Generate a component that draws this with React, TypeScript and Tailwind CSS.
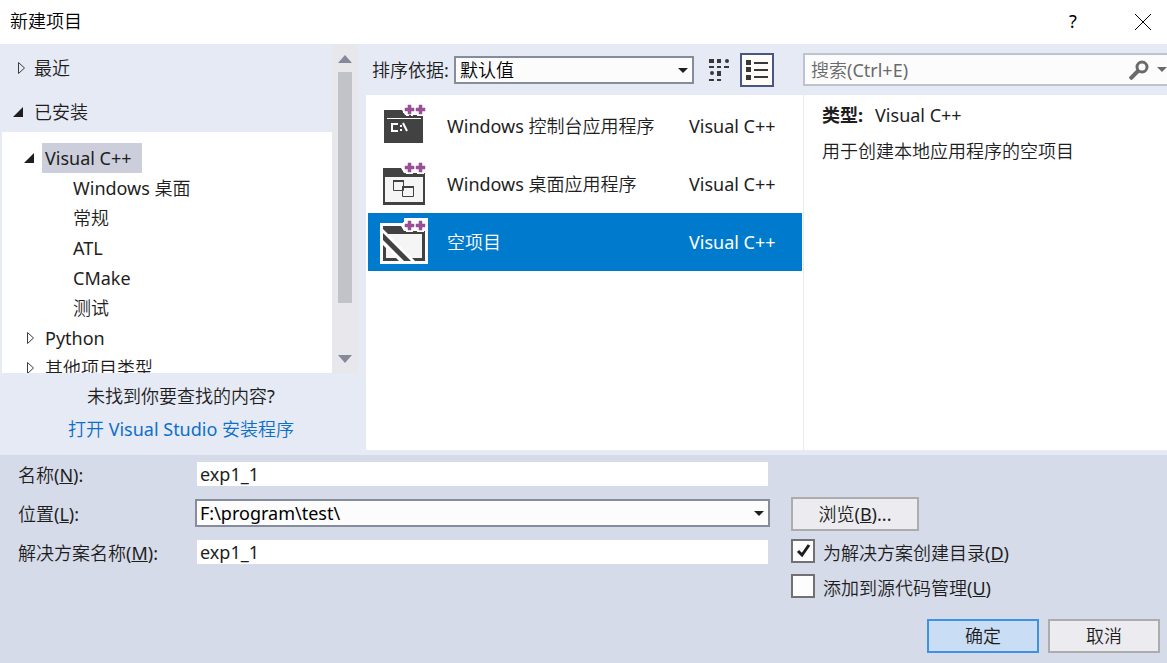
import type { ReactNode } from "react";

function PlusPair() {
  return (
    <g>
      <path d="M28 3h3v3h3v3h-3v3h-3v-3h-3v-3h3zM39 3h3v3h3v3h-3v3h-3v-3h-3v-3h3z" fill="#fff" stroke="#fff" strokeWidth="4" />
      <path d="M28 3h3v3h3v3h-3v3h-3v-3h-3v-3h3zM39 3h3v3h3v3h-3v3h-3v-3h-3v-3h3z" fill="#9b4f96" stroke="#9b4f96" strokeWidth="0.5" />
    </g>
  );
}

function ConsoleIcon() {
  return (
    <svg width="48" height="48" viewBox="0 0 48 48" aria-hidden="true">
      <path d="M4 8h18l3 5h18v28H4z" fill="#424242" />
      <PlusPair />
      <path d="M29 13h2v3h-2zM34 14h9v2h-9z" fill="#424242" />
      <path d="M7 16h34v1H7z" fill="#fff" />
      <path d="M18 22h-6v7h6M21 23v2M21 27v2M23 21l4 8" fill="none" stroke="#fff" strokeWidth="2" />
    </svg>
  );
}

function DesktopIcon() {
  return (
    <svg width="48" height="48" viewBox="0 0 48 48" aria-hidden="true">
      <path d="M3 8h18l3 5h21v32H3z" fill="#424242" />
      <path d="M5 17h38v25H5z" fill="#f5f5f5" />
      <PlusPair />
      <path d="M26 15h19v2H26z" fill="#424242" />
      <path d="M13.500 21.500h10v9h-10zM22.500 27.500h11v9h-11z" fill="#f5f5f5" stroke="#424242" />
      <path d="M13 21h11M22 27h12" stroke="#424242" strokeWidth="2" />
    </svg>
  );
}

function EmptyIcon() {
  return (
    <svg width="48" height="48" viewBox="0 0 48 48" aria-hidden="true">
      <path d="M0 5h24V0h24v46H0z" fill="#fff" />
      <path d="M3 8h18l3 5h21v30H3z" fill="#424242" />
      <path d="M6 16h36v24H6z" fill="#f5f5f5" />
      <PlusPair />
      <path d="M26 14h19v2H26z" fill="#424242" />
      <path d="M3 11l35 35H20L3 28z" fill="#fff" />
      <path d="M3 26l17 17H3zM10 16h32v24H34z" fill="#f5f5f5" />
      <path d="M3 27v16h16l-3-3H6V30zM34 40h8v3h-5z" fill="#424242" />
      <path d="M3 15l28 28h-7L3 22z" fill="#424242" />
    </svg>
  );
}

function Expander({ open = false }: { open?: boolean }) {
  return (
    <svg width="12" height="14" viewBox="0 0 12 14" className="shrink-0" aria-hidden="true">
      {open ? <path d="M11 2v10H1z" fill="#1e1e1e" /> : <path d="M4.500 1.500v11l6-5.500z" fill="none" stroke="#3c3c3c" />}
    </svg>
  );
}

function Caret({ className }: { className: string }) {
  return (
    <svg width="10" height="5" viewBox="0 0 10 5" className={className} aria-hidden="true">
      <path d="M0 0h10L5 5z" fill="currentColor" />
    </svg>
  );
}

function TreeRow({ label, level, open, selected }: { label: string; level: number; open?: boolean; selected?: boolean }) {
  return (
    <li className={level === 2 ? "flex h-[30px] items-center pl-[68px]" : "flex h-[30px] items-center gap-[7px] pl-[21px]"}>
      {level === 1 && <Expander open={open} />}
      <button className={selected ? "h-[30px] w-[100px] bg-[#cccedb] px-[3px] text-left" : "h-[30px] px-[3px]"}>{label}</button>
    </li>
  );
}

const templates: { name: string; icon: ReactNode; selected?: boolean }[] = [
  { name: "Windows 控制台应用程序", icon: <ConsoleIcon /> },
  { name: "Windows 桌面应用程序", icon: <DesktopIcon /> },
  { name: "空项目", icon: <EmptyIcon />, selected: true },
];

function Check({ checked, children }: { checked?: boolean; children: ReactNode }) {
  return (
    <label className="flex h-6 items-center gap-2">
      <span className="grid size-6">
        <input type="checkbox" defaultChecked={checked} className="peer col-start-1 row-start-1 size-6 appearance-none border-2 border-[#717171] bg-[#fdfdfd]" />
        <svg viewBox="0 0 24 24" className="pointer-events-none invisible col-start-1 row-start-1 size-6 peer-checked:visible" aria-hidden="true">
          <path d="M7 12l4 4 7-10" fill="none" stroke="#1e1e1e" strokeWidth="3" />
        </svg>
      </span>
      <span className="pt-1">{children}</span>
    </label>
  );
}

export default function App() {
  return (
    <div className="flex h-screen flex-col overflow-hidden bg-[#e6eaf5] font-['Noto_Sans','Noto_Sans_CJK_SC_DemiLight','Noto_Sans_CJK_SC_Light','Noto_Sans_CJK_SC',sans-serif] text-lg/6 text-[#1e1e1e]">
      <header className="flex h-11 shrink-0 items-center bg-white pl-[10px] text-black">
        <h1 className="flex-1 pb-[2px]">新建项目</h1>
        <button aria-label="帮助" className="h-11 w-[92px] pb-[2px]">?</button>
        <button aria-label="关闭" className="grid h-11 w-12 place-items-center">
          <svg width="16" height="16" viewBox="0 0 16 16" aria-hidden="true">
            <path d="M0 0l16 16M16 0L0 16" stroke="#000" />
          </svg>
        </button>
      </header>

      <main className="flex min-h-0 flex-1 pb-[5px]">
        <aside className="flex w-[366px] shrink-0 flex-col">
          <div className="flex min-h-0 flex-1 pr-2">
            <nav className="flex min-w-0 flex-1 flex-col pl-[2px]">
              <button className="flex h-12 shrink-0 items-center gap-2 pl-3"><Expander />最近</button>
              <button className="flex h-10 shrink-0 items-center gap-[10px] pl-[10px]"><Expander open />已安装</button>
              <ul className="min-h-0 flex-1 overflow-hidden bg-white pt-[11px]">
                <TreeRow label="Visual C++" level={1} open selected />
                <TreeRow label="Windows 桌面" level={2} />
                <TreeRow label="常规" level={2} />
                <TreeRow label="ATL" level={2} />
                <TreeRow label="CMake" level={2} />
                <TreeRow label="测试" level={2} />
                <TreeRow label="Python" level={1} />
                <TreeRow label="其他项目类型" level={1} />
              </ul>
            </nav>
            <div className="flex w-[26px] flex-col items-center bg-[#e8e8ec] pt-[11px] pb-[10px] text-[#868999]">
              <svg width="14" height="8" viewBox="0 0 14 8" aria-hidden="true"><path d="M0 8h14L7 0z" fill="currentColor" /></svg>
              <div className="mt-[9px] mb-[52px] w-[14px] flex-1 bg-[#c2c3c9]" />
              <svg width="14" height="8" viewBox="0 0 14 8" aria-hidden="true"><path d="M0 0h14L7 8z" fill="currentColor" /></svg>
            </div>
          </div>
          <div className="flex h-[77px] shrink-0 flex-col items-center gap-[9px] pt-[11px] pr-1">
            <p>未找到你要查找的内容?</p>
            <a href="#installer" className="text-[#0e6fc7]">打开 Visual Studio 安装程序</a>
          </div>
        </aside>

        <section className="flex w-[437px] shrink-0 flex-col">
          <div className="flex h-[51px] shrink-0 items-center pl-[6px]">
            <label htmlFor="sort" className="w-[82px]">排序依据:</label>
            <div className="relative">
              <select id="sort" className="h-7 w-60 appearance-none border-2 border-[#858c9c] bg-[#fcfcfd] px-1 leading-6 text-black">
                <option>默认值</option>
              </select>
              <Caret className="pointer-events-none absolute top-3 right-[6px]" />
            </div>
            <button aria-label="小图标" className="ml-[15px]">
              <svg width="20" height="22" viewBox="0 0 20 22" fill="#38383c" aria-hidden="true">
                <path d="M0 0h5v4H0zM8 0h4v4H8zM0 7h5v2H0zM8 7h4v2H8zM15 7h5v2h-5zM8 12h4v5H8zM0 20h5v2H0zM8 20h4v2H8z" />
                <circle cx="18" cy="2" r="2" />
                <circle cx="3" cy="14" r="2" />
              </svg>
            </button>
            <button aria-label="列表" className="ml-[11px] grid size-[34px] place-items-center border-2 border-[#4a5584] bg-[#fdfcf7]">
              <svg width="22" height="20" viewBox="0 0 22 20" fill="#38383c" aria-hidden="true">
                <path d="M0 0h5v5H0zM0 7h5v5H0zM0 15h5v5H0zM8 2h14v2H8zM8 9h14v2H8zM8 16h14v2H8z" />
              </svg>
            </button>
          </div>
          <ul className="flex-1 bg-white pt-[2px] pr-px pl-[2px]">
            {templates.map((t) => (
              <li key={t.name}>
                <button className={t.selected ? "flex h-[58px] w-full items-center bg-[#007acc] pl-3 text-left text-white" : "flex h-[58px] w-full items-center pl-3 text-left"}>
                  {t.icon}
                  <span className="w-[242px] pl-[19px]">{t.name}</span>
                  <span className="pl-[19px]">Visual C++</span>
                </button>
              </li>
            ))}
          </ul>
        </section>

        <section className="flex min-w-0 flex-1 flex-col">
          <div className="flex h-[51px] shrink-0 items-center">
            <div className="flex h-[33px] flex-1 items-center border-2 border-r-0 border-[#bfc3d0] bg-[#fcfcfd] pl-[6px]">
              <input aria-label="搜索" placeholder="搜索(Ctrl+E)" className="min-w-0 flex-1 bg-transparent placeholder:text-[#6a6a6a]" />
              <button aria-label="开始搜索" className="text-[#6a6a6a]">
                <svg width="20" height="20" viewBox="0 0 20 20" fill="none" stroke="currentColor" aria-hidden="true">
                  <circle cx="13" cy="7" r="5" strokeWidth="3" />
                  <path d="M9 11l-8 8" strokeWidth="4" />
                </svg>
              </button>
              <button aria-label="搜索选项" className="w-[18px] pl-2 text-[#6a6a6a]"><Caret className="" /></button>
            </div>
          </div>
          <div className="flex flex-1 flex-col gap-3 border-l border-[#e8eaf0] bg-white pt-2 pl-[18px]">
            <p className="flex gap-3"><b className="font-['Noto_Sans','Noto_Sans_CJK_SC',sans-serif] font-bold">类型:</b><span>Visual C++</span></p>
            <p>用于创建本地应用程序的空项目</p>
          </div>
        </section>
      </main>

      <footer className="shrink-0 bg-[#d6dbe9] pb-[10px]">
        <div className="flex">
          <div className="flex flex-col gap-[13px] pt-[7px] pl-[18px]">
            <div className="flex h-6 items-center">
              <label htmlFor="name" className="w-[179px] pt-[2px]">名称(<u>N</u>):</label>
              <input id="name" defaultValue="exp1_1" className="h-6 w-[571px] bg-white px-[3px]" />
            </div>
            <div className="flex h-7 items-center">
              <label htmlFor="location" className="w-[177px] pt-[2px]">位置(<u>L</u>):</label>
              <div className="relative">
                <select id="location" className="h-7 w-[575px] appearance-none border-2 border-[#858c9c] bg-[#fcfcfd] px-[3px] leading-6 text-black">
                  <option>F:\program\test\</option>
                </select>
                <Caret className="pointer-events-none absolute top-3 right-[6px]" />
              </div>
            </div>
            <div className="flex h-6 items-center">
              <label htmlFor="solution" className="w-[179px] pt-[2px]">解决方案名称(<u>M</u>):</label>
              <input id="solution" defaultValue="exp1_1" className="h-6 w-[571px] bg-white px-[3px]" />
            </div>
          </div>
          <div className="flex flex-col items-start pt-[42px] pl-[21px]">
            <button className="mb-2 h-[34px] w-32 border-2 border-[#acacac] bg-[#ececf0]">浏览(<u>B</u>)...</button>
            <div className="flex flex-col gap-[11px]">
              <Check checked>为解决方案创建目录(<u>D</u>)</Check>
              <Check>添加到源代码管理(<u>U</u>)</Check>
            </div>
          </div>
        </div>
        <div className="flex justify-end gap-[9px] pt-[21px] pr-[7px]">
          <button className="h-[34px] w-28 border-2 border-[#3e92e0] bg-[#c9def5]">确定</button>
          <button className="h-[34px] w-28 border-2 border-[#acacac] bg-[#ececf0]">取消</button>
        </div>
      </footer>
    </div>
  );
}
